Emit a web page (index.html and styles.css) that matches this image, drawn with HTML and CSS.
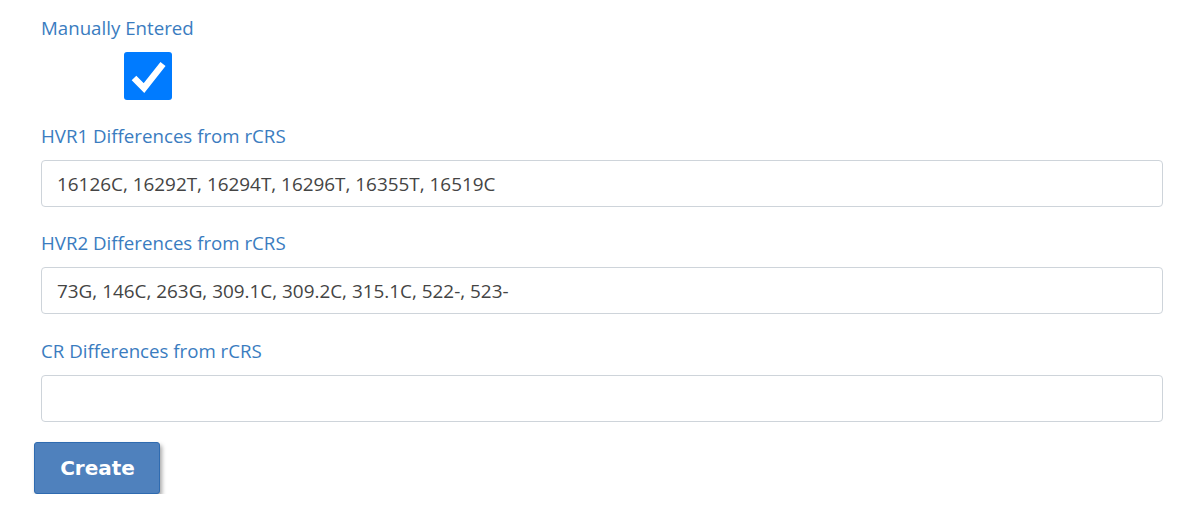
FILE: index.html
```html
<!DOCTYPE html>
<html>
<head>
<meta charset="utf-8">
<link rel="stylesheet" href="styles.css">
</head>
<body>
<form class="form">
  <div class="group">
    <label class="label">Manually Entered</label>
    <div class="check-row">
      <span class="checkbox">
        <svg width="36" height="36" viewBox="0 0 36 36"><path d="M4 20 L14 30 L33 6" fill="none" stroke="#fff" stroke-width="6.5" stroke-linecap="butt" stroke-linejoin="miter"/></svg>
      </span>
    </div>
  </div>
  <div class="group">
    <label class="label">HVR1 Differences from rCRS</label>
    <input class="input" type="text" value="16126C, 16292T, 16294T, 16296T, 16355T, 16519C">
  </div>
  <div class="group mid">
    <label class="label">HVR2 Differences from rCRS</label>
    <input class="input" type="text" value="73G, 146C, 263G, 309.1C, 309.2C, 315.1C, 522-, 523-">
  </div>
  <div class="group last">
    <label class="label">CR Differences from rCRS</label>
    <input class="input" type="text" value="">
  </div>
  <button type="button" class="btn">Create</button>
</form>
</body>
</html>
```
FILE: styles.css
```css
html, body {
  margin: 0;
  padding: 0;
  background: #fff;
}
body {
  font-family: "Open Sans", "Noto Sans", sans-serif;
}
.form {
  display: flex;
  flex-direction: column;
  padding: 16px 27px 0 41px;
}
.group {
  display: flex;
  flex-direction: column;
  margin-bottom: 24px;
}
.group.mid {
  margin-bottom: 25px;
}
.group.last {
  margin-bottom: 20px;
}
.label {
  color: #3a7cbf;
  font-size: 18.7px;
  line-height: 24px;
  height: 24px;
  margin-bottom: 12px;
  white-space: nowrap;
}
.check-row {
  padding-left: 83px;
  display: flex;
}
.checkbox {
  width: 48px;
  height: 48px;
  background: #007bff;
  border-radius: 3px;
  display: flex;
  align-items: center;
  justify-content: center;
}
.input {
  box-sizing: border-box;
  height: 47px;
  width: 100%;
  border: 1px solid #ced4da;
  border-radius: 4px;
  padding: 0 12px 0 15px;
  margin: 0;
  font-family: "Open Sans", "Noto Sans", sans-serif;
  font-size: 18.9px;
  color: #444;
  outline: none;
}
.btn {
  align-self: flex-start;
  margin-left: -7px;
  width: 126px;
  height: 52px;
  background: #4f81bd;
  border: 1px solid #2f6bb0;
  border-radius: 3px;
  color: #fff;
  font-family: "DejaVu Sans", Verdana, sans-serif;
  font-weight: bold;
  font-size: 20px;
  box-shadow: 2px 3px 4px rgba(0,0,0,0.35);
  padding: 0 0 0 1px;
}
```
